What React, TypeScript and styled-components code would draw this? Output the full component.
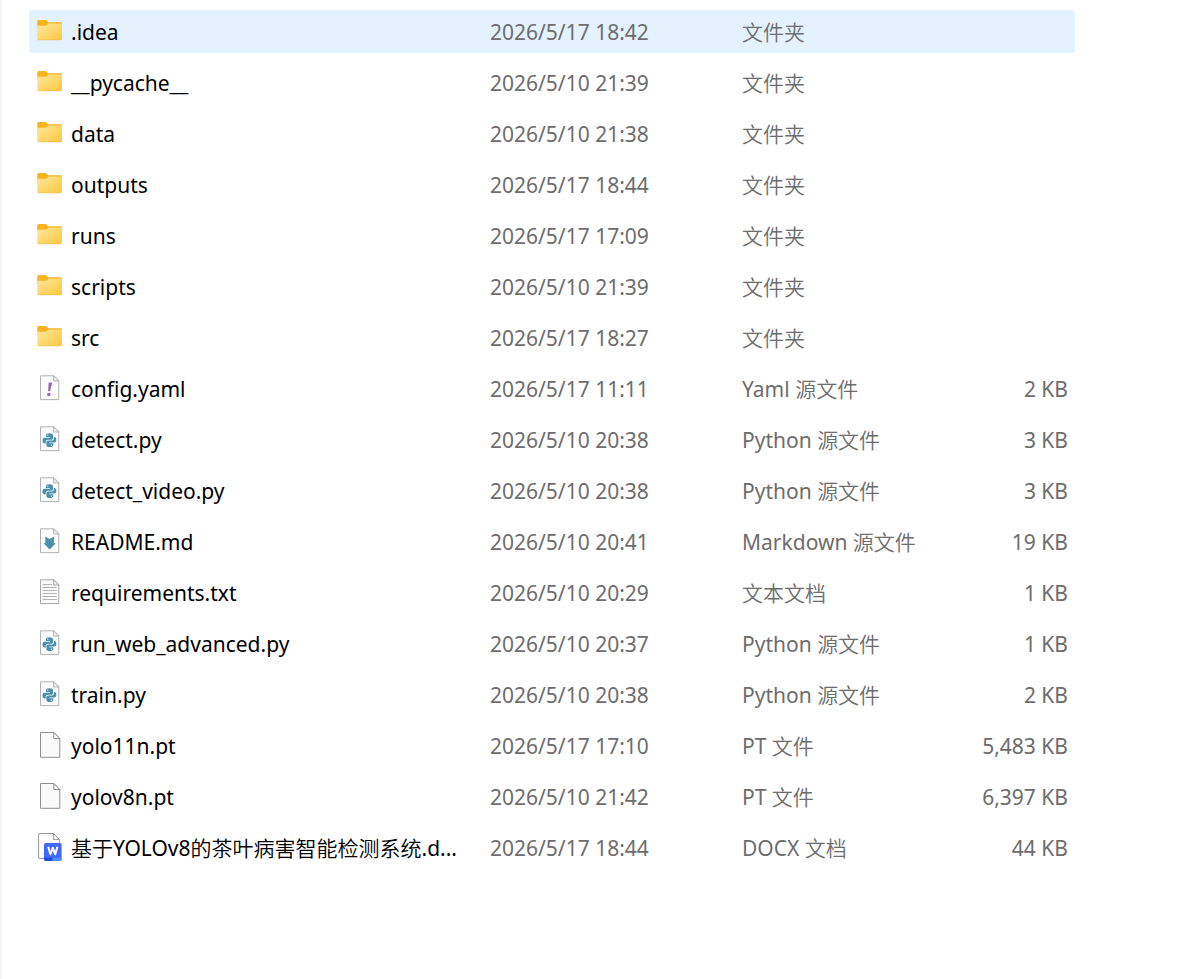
import React from "react";
import styled, { createGlobalStyle } from "styled-components";

type Kind = "folder" | "yaml" | "python" | "markdown" | "text" | "blank" | "word";

interface Entry {
  name: string;
  modified: string;
  type: string;
  size?: string;
  kind: Kind;
  highlighted?: boolean;
}

const entries: Entry[] = [
  { name: ".idea", modified: "2026/5/17 18:42", type: "文件夹", kind: "folder", highlighted: true },
  { name: "__pycache__", modified: "2026/5/10 21:39", type: "文件夹", kind: "folder" },
  { name: "data", modified: "2026/5/10 21:38", type: "文件夹", kind: "folder" },
  { name: "outputs", modified: "2026/5/17 18:44", type: "文件夹", kind: "folder" },
  { name: "runs", modified: "2026/5/17 17:09", type: "文件夹", kind: "folder" },
  { name: "scripts", modified: "2026/5/10 21:39", type: "文件夹", kind: "folder" },
  { name: "src", modified: "2026/5/17 18:27", type: "文件夹", kind: "folder" },
  { name: "config.yaml", modified: "2026/5/17 11:11", type: "Yaml 源文件", size: "2 KB", kind: "yaml" },
  { name: "detect.py", modified: "2026/5/10 20:38", type: "Python 源文件", size: "3 KB", kind: "python" },
  { name: "detect_video.py", modified: "2026/5/10 20:38", type: "Python 源文件", size: "3 KB", kind: "python" },
  { name: "README.md", modified: "2026/5/10 20:41", type: "Markdown 源文件", size: "19 KB", kind: "markdown" },
  { name: "requirements.txt", modified: "2026/5/10 20:29", type: "文本文档", size: "1 KB", kind: "text" },
  { name: "run_web_advanced.py", modified: "2026/5/10 20:37", type: "Python 源文件", size: "1 KB", kind: "python" },
  { name: "train.py", modified: "2026/5/10 20:38", type: "Python 源文件", size: "2 KB", kind: "python" },
  { name: "yolo11n.pt", modified: "2026/5/17 17:10", type: "PT 文件", size: "5,483 KB", kind: "blank" },
  { name: "yolov8n.pt", modified: "2026/5/10 21:42", type: "PT 文件", size: "6,397 KB", kind: "blank" },
  { name: "基于YOLOv8的茶叶病害智能检测系统.d...", modified: "2026/5/17 18:44", type: "DOCX 文档", size: "44 KB", kind: "word" },
];

const GlobalStyle = createGlobalStyle`
  *, *::before, *::after { box-sizing: border-box; }
  body {
    margin: 0;
    background: #ffffff;
    color: #000000;
    font-family: "Noto Sans", "Noto Sans CJK SC", sans-serif;
    font-size: 21px;
    line-height: 28px;
  }
`;

const Pane = styled.main`
  min-height: 100vh;
  padding: 2px 118px 40px 27px;
  border-left: 2px solid #f7f7f7;
`;

const FileTable = styled.table`
  width: 100%;
  table-layout: fixed;
  border-collapse: separate;
  border-spacing: 0 8px;
`;

const NameColumn = styled.col`
  width: 461px;
`;

const DateColumn = styled.col`
  width: 252px;
`;

const FileRow = styled.tr<{ $highlighted?: boolean }>`
  height: 43px;
  background: ${(p) => (p.$highlighted ? "#e3f2fe" : "transparent")};
`;

const Cell = styled.td<{ $align?: "left" | "right" }>`
  padding: 0;
  color: #6d6d6d;
  text-align: ${(p) => p.$align ?? "left"};
  white-space: nowrap;

  &:last-child {
    padding-right: 7px;
    border-radius: 0 3px 3px 0;
  }
`;

const NameCell = styled.th`
  padding: 0 0 0 8px;
  border-radius: 3px 0 0 3px;
  font-weight: 400;
  text-align: left;
`;

const NameContent = styled.div`
  display: flex;
  align-items: center;
  gap: 8px;
`;

const FileName = styled.span`
  white-space: nowrap;
`;

const Han = styled.span`
  font-weight: 350;
`;

const IconSvg = styled.svg`
  display: block;
  flex: none;
  width: 26px;
  height: 29px;
`;

/* Chinese runs are set lighter so that they balance with the Latin text. */
function MixedText({ text }: { text: string }) {
  return (
    <>
      {text
        .split(/([\u4e00-\u9fff]+)/)
        .filter(Boolean)
        .map((run, i) => (/[\u4e00-\u9fff]/.test(run) ? <Han key={i}>{run}</Han> : run))}
    </>
  );
}

function Sheet({ fill = "#fafcfd", stroke = "#b3b3b3" }: { fill?: string; stroke?: string }) {
  return (
    <>
      <path d="M3.5 1.8H17L21.8 6.6V25.6H3.5Z" fill={fill} stroke={stroke} />
      <path d="M16.6 1.8V7H21.8Z" fill="#f1f1f1" stroke={stroke} />
    </>
  );
}

function FileIcon({ kind }: { kind: Kind }) {
  return (
    <IconSvg viewBox="0 0 26 29" aria-hidden="true">
      {kind === "folder" && (
        <>
          <defs>
            <linearGradient id="folder-front" x1="0" y1="0" x2="1" y2="1">
              <stop offset="0" stopColor="#ffe7a0" />
              <stop offset="1" stopColor="#fdc83c" />
            </linearGradient>
          </defs>
          <path d="M0.3 4.5Q0.3 3 1.8 3H8.2Q9 3 9.6 3.6L11.2 5.3H23.6Q25 5.3 25 6.7V12H0.3Z" fill="#f6b31c" />
          <path d="M0.3 8.8H8.4Q9.4 8.8 10.1 8.1L11.6 6.5H25V21.6Q25 23 23.6 23H1.7Q0.3 23 0.3 21.6Z" fill="url(#folder-front)" />
          <path d="M0.8 22.8H24.4" stroke="#eeb94a" strokeWidth="0.6" />
        </>
      )}
      {kind === "yaml" && (
        <>
          <Sheet />
          <path d="M11.7 8.6H15.2L13.1 17.3H11.1Z" fill="#9468b4" />
          <circle cx="11.8" cy="20.5" r="1.7" fill="#9468b4" />
        </>
      )}
      {kind === "python" && (
        <>
          <Sheet />
          <g fill="#4b8fae">
            <path d="M12.4 8.2C9.9 8.2 9 9 9 10.3V12H13V12.7H7.6C6 12.7 5.5 14 5.5 15.6C5.5 17.3 6.2 18.4 7.5 18.4H8.7V16.9C8.7 15.5 9.6 14.8 11 14.8H14.2C15.3 14.8 16 14 16 13V10.3C16 8.9 14.8 8.2 12.4 8.2Z" />
            <path d="M12.9 22.1C15.4 22.1 16.3 21.3 16.3 20V18.3H12.3V17.6H17.2C18.8 17.6 19.3 16.4 19.3 14.8C19.3 13.1 18.6 11.9 17.3 11.9H16.8V13.4C16.8 14.9 15.7 15.6 14.4 15.6H11.3C10.1 15.6 9.4 16.4 9.4 17.4V20C9.4 21.4 10.5 22.1 12.9 22.1Z" />
          </g>
          <circle cx="10.8" cy="10.1" r="0.7" fill="#fafcfd" />
          <circle cx="14.5" cy="20.2" r="0.7" fill="#fafcfd" />
        </>
      )}
      {kind === "markdown" && (
        <>
          <Sheet />
          <path d="M8.3 9.6L12.6 11.9L16.9 9.6V16.2H18.8L12.6 22.6L6.7 16.2H8.3Z" fill="#4b8fae" />
        </>
      )}
      {kind === "text" && (
        <>
          <Sheet fill="#fafafa" stroke="#a9a9a9" />
          <path d="M5.5 6.5H15M5.5 9.5H19.8M5.5 12.5H19.8M5.5 15.5H19.8M5.5 18.5H19.8M5.5 21.5H19.8" stroke="#b4b4b4" />
        </>
      )}
      {kind === "blank" && (
        <>
          <path d="M3.5 1.5H16.8L22.8 7.5V26.3H3.5Z" fill="#fafafa" stroke="#8e8e8e" />
          <path d="M16.8 1.5V7.5H22.8Z" fill="#ffffff" stroke="#8e8e8e" />
        </>
      )}
      {kind === "word" && (
        <>
          <path d="M3 0.5H16.4L22.3 6.4V25.5H3Q1.6 25.5 1.6 24V2Q1.6 0.5 3 0.5Z" fill="#ffffff" stroke="#979797" />
          <path d="M16.4 0.5V6.4H22.3Z" fill="#ffffff" stroke="#979797" />
          <rect x="7" y="10" width="17.6" height="18" rx="2" fill="#3f69fb" />
          <path d="M7 24.8H15.5V28H9Q7 28 7 26Z" fill="#1c4fe0" />
          <path d="M15.5 24.8H24.6V26Q24.6 28 22.6 28H15.5Z" fill="#5286ff" />
          <path d="M11.2 13.8L13.4 21.2L15.8 14.8L18.2 21.2L20.4 13.8" fill="none" stroke="#ffffff" strokeWidth="2" strokeLinejoin="round" />
        </>
      )}
    </IconSvg>
  );
}

export default function App() {
  return (
    <>
      <GlobalStyle />
      <Pane>
        <FileTable>
          <colgroup>
            <NameColumn />
            <DateColumn />
            <col />
            <col />
          </colgroup>
          <tbody>
            {entries.map((entry) => (
              <FileRow key={entry.name} $highlighted={entry.highlighted}>
                <NameCell scope="row">
                  <NameContent>
                    <FileIcon kind={entry.kind} />
                    <FileName>
                      <MixedText text={entry.name} />
                    </FileName>
                  </NameContent>
                </NameCell>
                <Cell>{entry.modified}</Cell>
                <Cell>
                  <MixedText text={entry.type} />
                </Cell>
                <Cell $align="right">{entry.size}</Cell>
              </FileRow>
            ))}
          </tbody>
        </FileTable>
      </Pane>
    </>
  );
}
